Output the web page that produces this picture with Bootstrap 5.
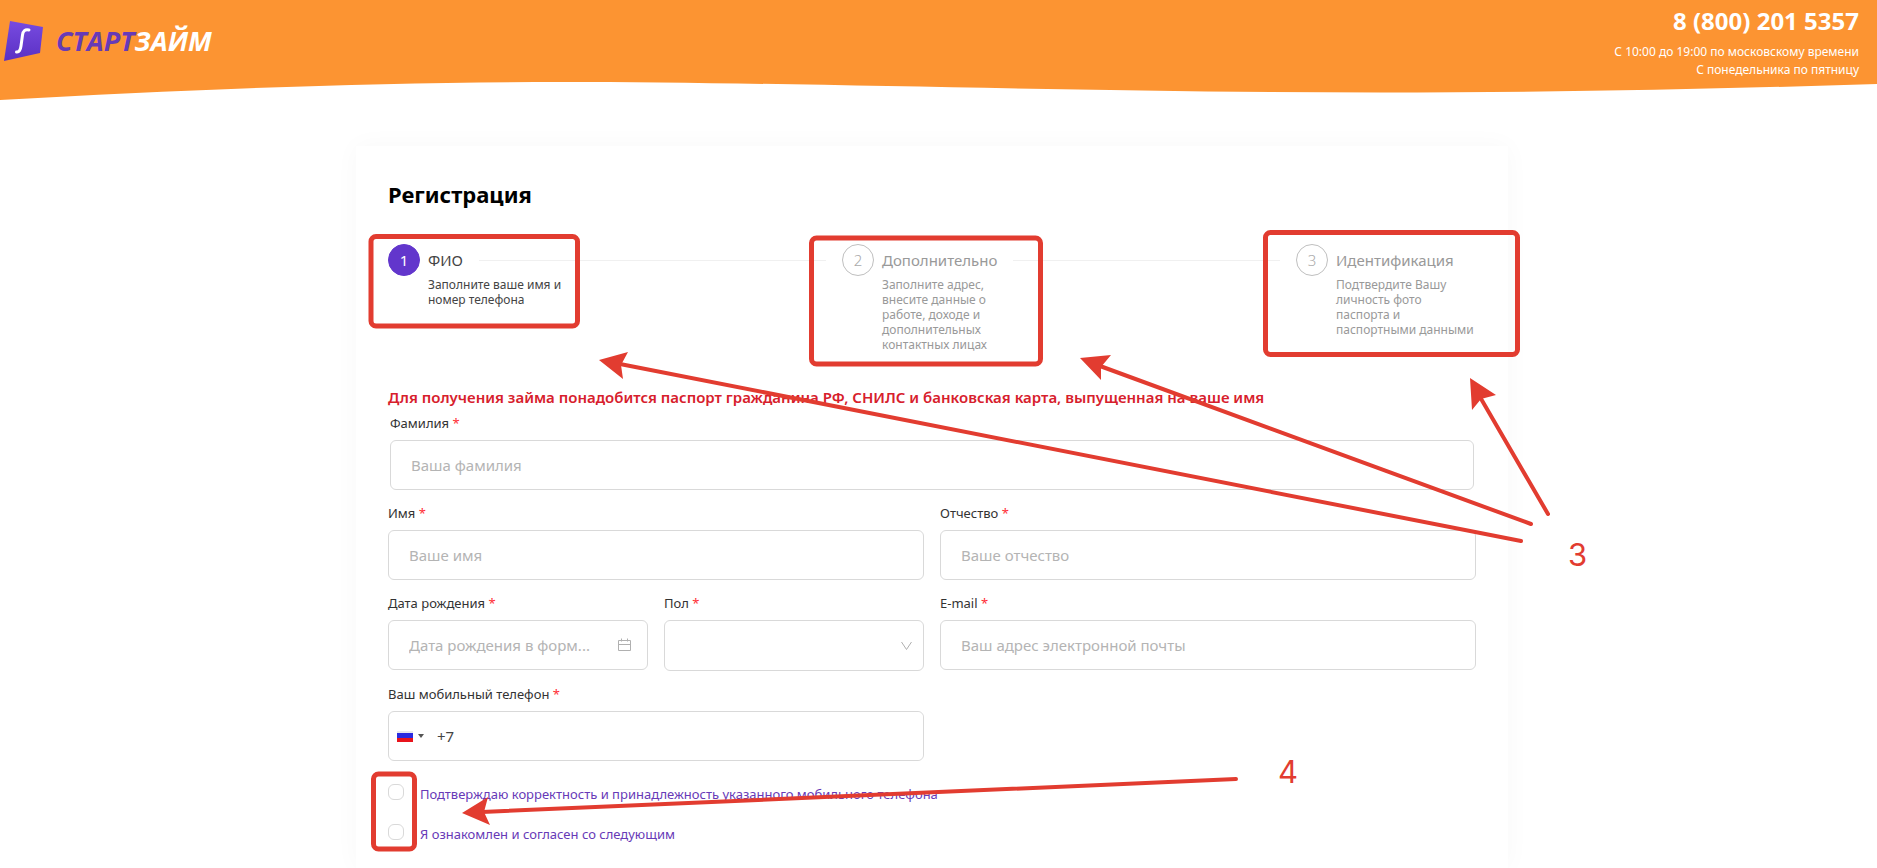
<!DOCTYPE html>
<html lang="ru">
<head>
<meta charset="utf-8">
<meta name="viewport" content="width=device-width, initial-scale=1">
<title>СтартЗайм — регистрация</title>
<link rel="stylesheet" href="https://cdn.jsdelivr.net/npm/bootstrap@5.3.0/dist/css/bootstrap.min.css">
<style>
  :root { --brand: #fc9432; --violet: #6236cc; --line: #d9d9d9; }
  body { font-family: "Noto Sans", "Open Sans", sans-serif; font-size: 15px; color: #333; background: #fff; overflow: hidden; }
  .site-head { background: var(--brand); height: 82px; padding: 7px 18px 0 4px; }
  .wave { display: block; width: 100%; height: 18px; }
  .logo { font: italic 700 27px/32px "Open Sans", sans-serif; color: #fff; margin-top: 13px; }
  .logo:hover { color: #fff; }
  .logo span span { color: #673ab7; }
  .hotline { font-weight: 700; font-size: 24px; line-height: 28px; }
  .hours { font-size: 12px; line-height: 18px; }
  .page-main { padding-right: 13px; }
  .panel { width: 100%; max-width: 1152px; margin-top: 46px; padding: 32px 32px 0; background: #fff; box-shadow: 0 0 24px rgba(0, 0, 0, .03); }
  .panel h1 { font-size: 22px; line-height: 32px; font-weight: 700; color: #000; margin-bottom: 34px; }
  .step { flex: 1; padding-right: 16px; color: #999; }
  .step:last-child { flex: 0 0 180px; padding-right: 0; }
  .step-num { flex: none; width: 32px; height: 32px; border: 1px solid #bfbfbf; border-radius: 50%; line-height: 30px; text-align: center; font-weight: 300; color: #aaa; }
  .step-name { line-height: 32px; }
  .step:not(:last-child) .step-name::after { content: ""; flex: 1; height: 1px; margin-left: 16px; background: #f0f0f0; }
  .step-text { font-size: 12px; line-height: 15px; max-width: 144px; margin: 1px 0 0; }
  .step.current { color: #444; }
  .current .step-num { background: var(--violet); border-color: var(--violet); color: #fff; font-weight: 400; }
  .steps { height: 109px; margin-bottom: 32px; }
  .notice { font-weight: 600; line-height: 24px; color: #d7202c; margin-bottom: 4px; }
  .form-row { --bs-gutter-x: 16px; margin-bottom: 13px; }
  .form-row.inset { padding: 0 2px; }
  .form-label { display: block; font-size: 13px; line-height: 20px; margin-bottom: 7px; color: #333; }
  .form-label.req::after { content: " *"; color: #ff2d35; }
  .form-control, .form-select { height: 50px; border: 1px solid var(--line); border-radius: 6px; padding: 0 20px; font-size: 15px; color: #444; text-overflow: ellipsis; }
  .form-control::placeholder { color: #b4b4b4; opacity: 1; }
  .form-select { height: 51px; background-image: none; }
  .phone { height: 50px; border: 1px solid var(--line); border-radius: 6px; }
  .phone button { border: 0; background: none; padding: 0 0 0 8px; }
  .phone .form-control { height: 48px; border: 0; padding: 0 12px; }
  .fld-icon { position: absolute; right: 16px; top: 18px; pointer-events: none; }
  .fld-icon.arrow { right: 10px; }
  .agree { height: 40px; gap: 16px; font-size: 13px; line-height: 40px; color: #673ab7; }
  .agree .form-check-input { flex: none; width: 16px; height: 16px; margin: 10px 0 0; border: 1px solid var(--line); border-radius: 6px; }
  .marks { position: absolute; left: 0; top: 0; width: 1152px; height: 722px; overflow: visible; pointer-events: none; }
</style>
</head>
<body class="d-flex flex-column vh-100">
<header>
  <div class="site-head d-flex justify-content-between align-items-start">
    <a href="#" class="logo d-flex align-items-center text-decoration-none">
      <svg width="40" height="42" viewBox="0 0 40 42" aria-hidden="true">
        <defs><linearGradient id="lg" x1="0" y1="0" x2="0" y2="1"><stop offset="0" stop-color="#774be0"/><stop offset="1" stop-color="#5b30c4"/></linearGradient></defs>
        <path d="M6 1 39 7 36 33 0 41Z" fill="url(#lg)"/>
        <path d="M25 10c-4-1-6 1-6.500 5l-1.500 11c-.5 4-2 6.500-4.500 6" fill="none" stroke="#fff" stroke-width="3" stroke-linecap="round"/>
      </svg>
      <span class="ms-2 ps-1"><span>СТАРТ</span>ЗАЙМ</span>
    </a>
    <div class="text-end text-white">
      <div class="hotline mb-2">8 (800) 201 5357</div>
      <div class="hours">С 10:00 до 19:00 по московскому времени</div>
      <div class="hours">С понедельника по пятницу</div>
    </div>
  </div>
  <svg class="wave" viewBox="0 0 1877 18" preserveAspectRatio="none" aria-hidden="true"><path d="M0-1V18C200 7 380 0 560 0 800 0 1080 10.500 1380 10.500 1560 10.500 1720 7 1877 2V-1Z" fill="#fc9432"/></svg>
</header>
<main class="page-main d-flex justify-content-center flex-grow-1">
  <section class="panel position-relative">
    <h1>Регистрация</h1>
    <div class="steps d-flex">
      <div class="step current d-flex gap-2">
        <div class="step-num">1</div>
        <div class="flex-grow-1">
          <div class="step-name d-flex align-items-center">ФИО</div>
          <p class="step-text">Заполните ваше имя и номер телефона</p>
        </div>
      </div>
      <div class="step d-flex gap-2">
        <div class="step-num">2</div>
        <div class="flex-grow-1">
          <div class="step-name d-flex align-items-center">Дополнительно</div>
          <p class="step-text">Заполните адрес,<br>внесите данные о<br>работе, доходе и<br>дополнительных<br>контактных лицах</p>
        </div>
      </div>
      <div class="step d-flex gap-2">
        <div class="step-num">3</div>
        <div>
          <div class="step-name">Идентификация</div>
          <p class="step-text">Подтвердите Вашу<br>личность фото<br>паспорта и<br>паспортными данными</p>
        </div>
      </div>
    </div>
    <p class="notice">Для получения займа понадобится паспорт гражданина РФ, СНИЛС и банковская карта, выпущенная на ваше имя</p>
    <form>
      <div class="form-row inset">
        <label class="form-label req" for="surname">Фамилия</label>
        <input class="form-control" id="surname" type="text" placeholder="Ваша фамилия">
      </div>
      <div class="row form-row">
        <div class="col-6">
          <label class="form-label req" for="name">Имя</label>
          <input class="form-control" id="name" type="text" placeholder="Ваше имя">
        </div>
        <div class="col-6">
          <label class="form-label req" for="patronymic">Отчество</label>
          <input class="form-control" id="patronymic" type="text" placeholder="Ваше отчество">
        </div>
      </div>
      <div class="row form-row">
        <div class="col-3">
          <label class="form-label req" for="birth">Дата рождения</label>
          <div class="position-relative">
            <input class="form-control" id="birth" type="text" placeholder="Дата рождения в форм...">
            <svg class="fld-icon" width="14" height="14" viewBox="0 0 14 14" fill="none" stroke="#b0b0b0" aria-hidden="true"><path d="M.5 2.500h12v10H.5zM.5 6.500h12M3.500.5v3M9.500.5v3"/></svg>
          </div>
        </div>
        <div class="col-3">
          <label class="form-label req" for="sex">Пол</label>
          <div class="position-relative">
            <select class="form-select" id="sex"><option></option></select>
            <svg class="fld-icon arrow" width="14" height="14" viewBox="0 0 14 14" fill="none" stroke="#b0b0b0" aria-hidden="true"><path d="M1.500 4l5 7.500L11.500 4"/></svg>
          </div>
        </div>
        <div class="col-6">
          <label class="form-label req" for="email">E-mail</label>
          <input class="form-control" id="email" type="email" placeholder="Ваш адрес электронной почты">
        </div>
      </div>
      <div class="row form-row">
        <div class="col-6">
          <label class="form-label req" for="phone">Ваш мобильный телефон</label>
          <div class="phone d-flex">
            <button type="button" class="d-flex align-items-center gap-1" aria-label="Код страны">
              <svg width="16" height="11" viewBox="0 0 16 11" aria-hidden="true"><path fill="#e8e8ee" d="M0 0h16v4H0z"/><path fill="#2a2ae0" d="M0 2h16v5H0z"/><path fill="#e8141c" d="M0 7h16v4H0z"/></svg>
              <svg width="8" height="11" viewBox="0 0 8 11" aria-hidden="true"><path fill="#555" d="M1 3h6L4 7z"/></svg>
            </button>
            <input class="form-control" id="phone" type="tel" value="+7">
          </div>
        </div>
      </div>
      <div class="agree d-flex">
        <input class="form-check-input" type="checkbox" id="ok1">
        <label for="ok1">Подтверждаю корректность и принадлежность указанного мобильного телефона</label>
      </div>
      <div class="agree d-flex">
        <input class="form-check-input" type="checkbox" id="ok2">
        <label for="ok2">Я ознакомлен и согласен со следующим</label>
      </div>
    </form>
    <!-- callouts: frames, arrows and their numbers -->
    <svg class="marks" viewBox="356 146 1152 722" aria-hidden="true">
      <g fill="none" stroke="#e23c30" stroke-width="5">
        <rect x="371" y="236.500" width="206.500" height="89.500" rx="5"/>
        <rect x="811.500" y="238" width="229" height="126" rx="5"/>
        <rect x="1265.500" y="232.500" width="252" height="122" rx="5"/>
        <rect x="373.500" y="774" width="41" height="75" rx="5"/>
      </g>
      <g stroke="#e23c30" stroke-width="4" stroke-linecap="round">
        <path d="M620 364 1521 541M1100 366 1531 524M1480 397 1548 514M482 812 1236 779"/>
      </g>
      <g fill="#e23c30">
        <path d="M599 360 628 352 621 365 623 379ZM1080 358 1111 355 1101 367 1101 380ZM1470 378 1496 395 1481 399 1472 410ZM462 813 488 797 484 812 490 825Z"/>
        <g font-family="Inter, sans-serif" font-size="31"><text x="1568" y="566">3</text><text x="1278" y="783">4</text></g>
      </g>
    </svg>
  </section>
</main>
<script src="https://cdn.jsdelivr.net/npm/bootstrap@5.3.0/dist/js/bootstrap.bundle.min.js"></script>
</body>
</html>
